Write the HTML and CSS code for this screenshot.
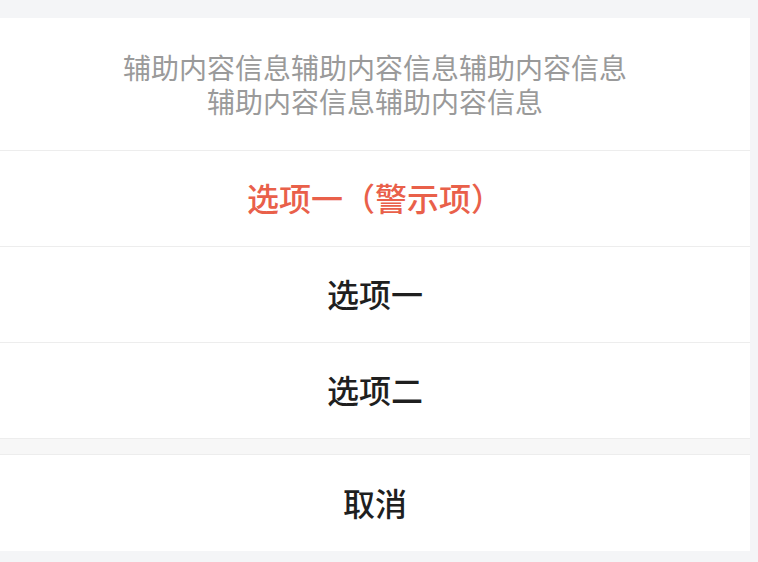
FILE: index.html
```html
<!DOCTYPE html>
<html lang="zh-CN">
<head>
    <meta charset="UTF-8">
    <meta name="viewport" content="width=device-width, initial-scale=1.0">
    <title>ActionSheet</title>
    <link rel="stylesheet" href="styles.css">
</head>
<body>
    <div class="sheet">
        <div class="sheet-desc">
            <div class="desc-line">辅助内容信息辅助内容信息辅助内容信息</div>
            <div class="desc-line">辅助内容信息辅助内容信息</div>
        </div>
        <div class="sheet-item warn">选项一（警示项）</div>
        <div class="sheet-item">选项一</div>
        <div class="sheet-item">选项二</div>
        <div class="sheet-gap"></div>
        <div class="sheet-item cancel">取消</div>
    </div>
</body>
</html>
```

FILE: styles.css
```css
body {
    margin: 0;
    padding: 18px 8px 12px 0;
    background-color: #f4f5f7;
    font-family: "Noto Sans CJK SC", "Noto Sans", sans-serif;
}

.sheet {
    background: #fff;
    width: 750px;
}

.sheet-desc {
    padding: 32px 40px;
    font-size: 28px;
    color: #9a9a9a;
    text-align: center;
    border-bottom: 1px solid #ededed;
}

.desc-line {
    height: 34px;
    line-height: 34px;
}

.sheet-item {
    height: 92px;
    padding-bottom: 3px;
    display: flex;
    align-items: center;
    justify-content: center;
    font-size: 32px;
    font-weight: 500;
    color: #1f1f1f;
    border-bottom: 1px solid #ededed;
}

.sheet-item.warn {
    color: #e9604a;
}

.sheet-item.cancel {
    height: 93px;
    border-bottom: none;
}

.sheet-gap {
    height: 15px;
    background: #f7f7f7;
    border-bottom: 1px solid #ededed;
}
```
